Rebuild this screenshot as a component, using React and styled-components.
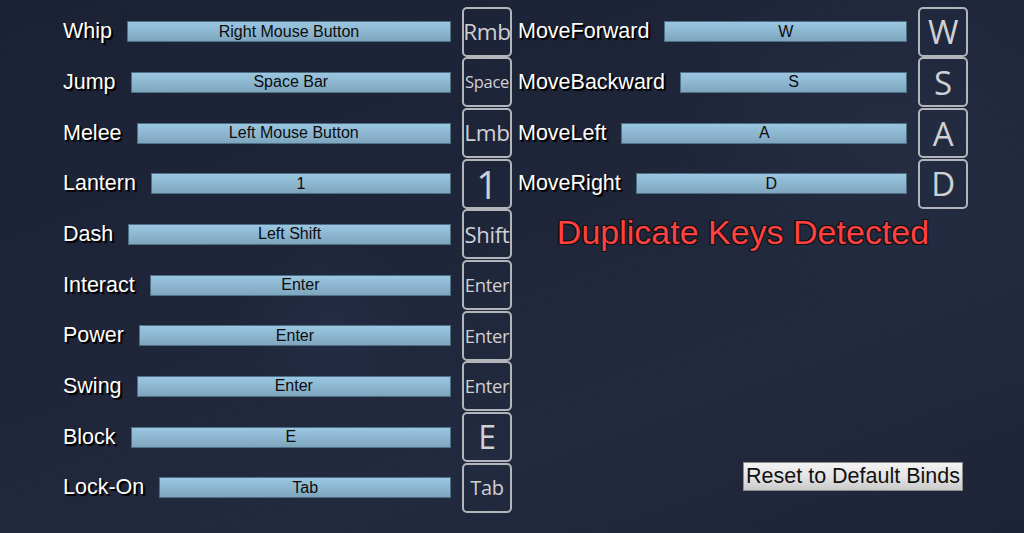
import React from "react"
import styled, { createGlobalStyle } from "styled-components"

const GlobalStyle = createGlobalStyle`
  html, body {
    margin: 0;
    padding: 0;
    background: #1e2438;
  }
`

const Screen = styled.div`
  width: 1024px;
  height: 533px;
  overflow: hidden;
  box-sizing: border-box;
  padding: 6.5px 0 0 63px;
  display: flex;
  gap: 6px;
  background:
    radial-gradient(circle at 330px 330px, rgba(40, 52, 80, 0.45) 0, rgba(40, 52, 80, 0) 90px),
    radial-gradient(circle at 880px 120px, rgba(45, 55, 80, 0.35) 0, rgba(45, 55, 80, 0) 200px),
    linear-gradient(160deg, #1c2235 0%, #1f263a 45%, #222a3f 70%, #1e2437 100%);
  font-family: "Liberation Sans", Arial, sans-serif;
`

const Column = styled.div`
  width: ${(p) => p.width}px;
  display: flex;
  flex-direction: column;
`

const BindList = styled.div`
  display: grid;
  grid-auto-rows: 50.67px;
`

const Row = styled.div`
  display: flex;
  align-items: center;
`

const Label = styled.span`
  color: #ffffff;
  font-size: 21.5px;
  white-space: nowrap;
  margin-right: 15px;
  text-shadow: 1px 1px 0 #000, 2px 2px 1px #000;
`

const Bar = styled.div`
  flex: 1;
  height: 21px;
  box-sizing: border-box;
  border: 1px solid #4f6f86;
  background: linear-gradient(180deg, #9ac6e0 0%, #8db7d1 50%, #7ea5bc 100%);
  color: #0c0c0c;
  font-size: 16px;
  display: flex;
  align-items: center;
  justify-content: center;
  margin-right: 11px;
`

const Key = styled.div`
  width: 50px;
  height: 50px;
  box-sizing: border-box;
  border: 2px solid #b4b5ba;
  border-radius: 5px;
  display: flex;
  align-items: center;
  justify-content: center;
  color: #cfd0d4;
  font-family: "Open Sans", "Noto Sans", sans-serif;
  font-size: ${(p) => p.size}px;
  line-height: 1;
  overflow: hidden;
  white-space: nowrap;
  letter-spacing: -0.3px;
`

const Warning = styled.div`
  margin-top: 4px;
  text-align: center;
  color: #ff4141;
  font-size: 34px;
  text-shadow:
    -1px -1px 0 #111, 1px -1px 0 #111, -1px 1px 0 #111, 1px 1px 0 #111,
    0 -1px 0 #111, 0 1px 0 #111, -1px 0 0 #111, 1px 0 0 #111;
`

const ResetButton = styled.button`
  margin-top: auto;
  margin-bottom: 42px;
  margin-left: auto;
  margin-right: 5px;
  width: 220px;
  height: 29px;
  padding: 0;
  border: 1px solid #8d8d8d;
  background: linear-gradient(180deg, #f3f3f3 0%, #e2e2e2 55%, #c9c9c9 100%);
  color: #111;
  font-family: "Liberation Sans", Arial, sans-serif;
  font-size: 21.5px;
  white-space: nowrap;
  cursor: pointer;
`

const leftBinds = [
  { name: "Whip", value: "Right Mouse Button", key: "Rmb", size: 22.5 },
  { name: "Jump", value: "Space Bar", key: "Space", size: 16.5 },
  { name: "Melee", value: "Left Mouse Button", key: "Lmb", size: 22.5 },
  { name: "Lantern", value: "1", key: "1", size: 38 },
  { name: "Dash", value: "Left Shift", key: "Shift", size: 22 },
  { name: "Interact", value: "Enter", key: "Enter", size: 18.5 },
  { name: "Power", value: "Enter", key: "Enter", size: 18.5 },
  { name: "Swing", value: "Enter", key: "Enter", size: 18.5 },
  { name: "Block", value: "E", key: "E", size: 32 },
  { name: "Lock-On", value: "Tab", key: "Tab", size: 20 },
]

const rightBinds = [
  { name: "MoveForward", value: "W", key: "W", size: 33 },
  { name: "MoveBackward", value: "S", key: "S", size: 33 },
  { name: "MoveLeft", value: "A", key: "A", size: 33 },
  { name: "MoveRight", value: "D", key: "D", size: 33 },
]

const BindRow = ({ bind }) => (
  <Row>
    <Label>{bind.name}</Label>
    <Bar>{bind.value}</Bar>
    <Key size={bind.size}>{bind.key}</Key>
  </Row>
)

const App = () => {
  return (
    <Screen>
      <GlobalStyle />
      <Column width={449}>
        <BindList>
          {leftBinds.map((b) => (
            <BindRow key={b.name} bind={b} />
          ))}
        </BindList>
      </Column>
      <Column width={450}>
        <BindList>
          {rightBinds.map((b) => (
            <BindRow key={b.name} bind={b} />
          ))}
        </BindList>
        <Warning>Duplicate Keys Detected</Warning>
        <ResetButton>Reset to Default Binds</ResetButton>
      </Column>
    </Screen>
  )
}

export default App
